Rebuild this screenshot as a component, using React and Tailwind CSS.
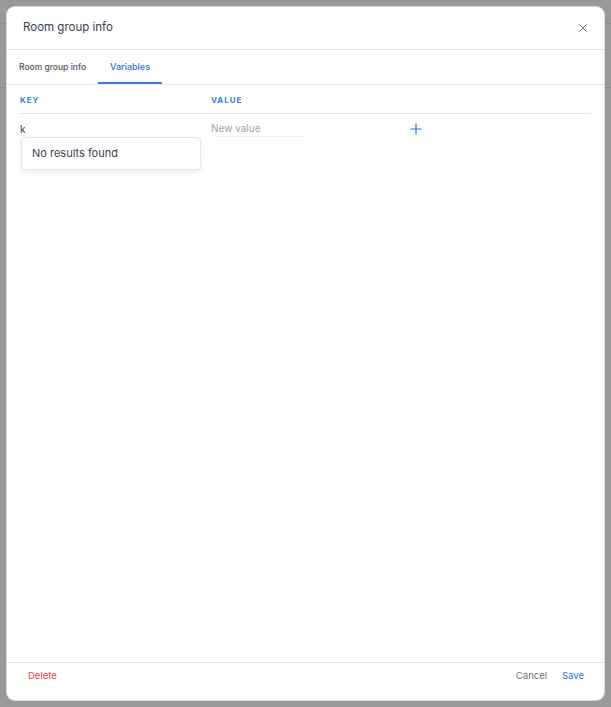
import { X } from 'lucide-react';

const App = () => {
  return (
    <div
      className="relative h-[707px] w-[611px] overflow-hidden bg-[#999999]"
      style={{ fontFamily: 'Inter, "Open Sans", sans-serif' }}
    >
      {/* page behind the overlay */}
      <div className="h-[24px] border-b border-[#8c8c8c]" />
      <div className="h-[64px] border-b border-[#8c8c8c]" />

      <div className="absolute left-[7px] top-[7px] flex h-[693px] w-[597px] flex-col rounded-[8px] bg-white shadow-[0_0_0_1px_#d6dae3]">
        <div className="flex h-[43px] items-center justify-between border-b border-[#e5e7eb] pl-[16px] pr-[14px]">
          <h2 className="text-[11.5px] text-[#374151]">Room group info</h2>
          <X size={14} strokeWidth={1.6} className="text-[#6b7280]" />
        </div>

        <div className="flex h-[35px] border-b border-[#e5e7eb] pl-[3px]">
          <button className="px-[9px] text-[8.5px] font-medium text-[#4b5563]">Room group info</button>
          <button className="ml-[3px] border-b-2 border-[#3b7ddd] px-[12px] pt-[2px] text-[9px] font-medium text-[#2f6fdc]">
            Variables
          </button>
        </div>

        <div className="px-[13px]">
          <div className="flex h-[29px] items-center border-b border-[#e5e7eb] pt-[2px] text-[8px] font-bold tracking-[0.12em] text-[#3b7ddd]">
            <span className="w-[191px]">KEY</span>
            <span>VALUE</span>
          </div>
          <div className="relative flex h-[28px] items-center pt-[2px] text-[10px]">
            <span className="w-[191px] text-[#374151]">k</span>
            <div className="w-[98px] rounded-[4px] border-b border-[#f1f2f5] text-[#9ca3af]">New value</div>
            <svg width="12" height="12" viewBox="0 0 12 12" className="ml-[101px]">
              <path d="M6 0.5V11.5M0.5 6H11.5" stroke="#2f6fdc" strokeWidth="1.2" />
            </svg>
            <div className="absolute left-[1px] top-[23px] flex h-[33px] w-[180px] items-center rounded-[4px] border border-[#e3e6ec] bg-white pl-[10px] text-[11px] text-[#374151] shadow-[0_2px_4px_rgba(0,0,0,0.08)]">
              No results found
            </div>
          </div>
        </div>

        <div className="flex-1" />

        <div className="flex h-[38px] items-start justify-between border-t border-[#e5e7eb] pl-[21px] pr-[20px] pt-[6px] text-[9.5px]">
          <button className="text-[#ef4444]">Delete</button>
          <div className="flex gap-[15px]">
            <button className="text-[#6b7280]">Cancel</button>
            <button className="text-[#2f6fdc]">Save</button>
          </div>
        </div>
      </div>
    </div>
  );
};

export default App;
